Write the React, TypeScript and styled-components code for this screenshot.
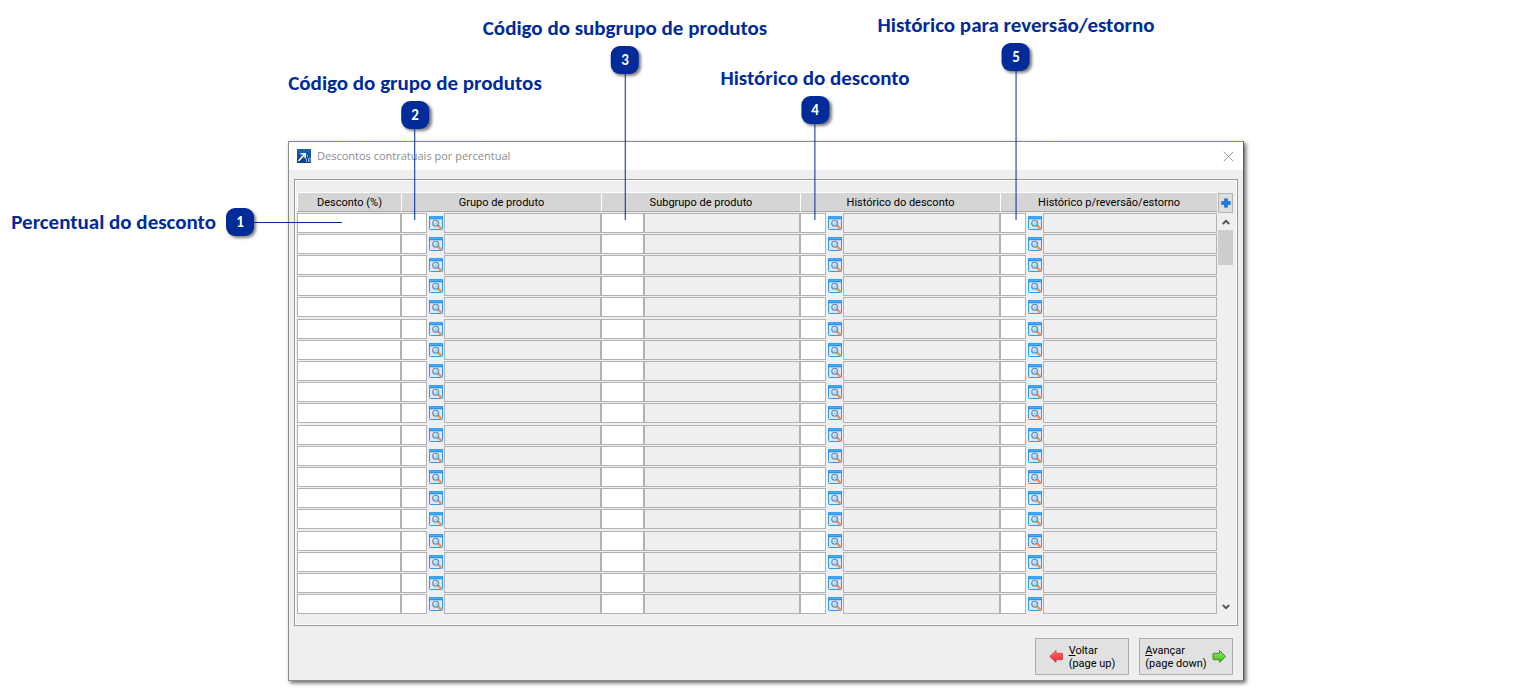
import React from "react";
import styled, { createGlobalStyle } from "styled-components";

const NAVY = "#002b98";
const UI_FONT = `Roboto, "Noto Sans", sans-serif`;
const CALLOUT_FONT = `Carlito, Lato, sans-serif`;

const GlobalStyle = createGlobalStyle`
  * { box-sizing: border-box; }
  body { margin: 0; background: #fff; }
`;

const Page = styled.main`
  padding: 141px 295px 15px 288px;
`;

const Dialog = styled.section`
  position: relative;
  min-width: 956px;
  border: 1px solid #8c8c8c;
  border-right-color: #5c5c5c;
  background: #efefef;
  box-shadow: 2px 2px 4px rgba(0, 0, 0, 0.6);
  font-family: ${UI_FONT};
  font-size: 11px;
  color: #000;
`;

const TopEdge = styled.div`
  position: absolute;
  inset: -1px 0 auto -1px;
  height: 1px;
  background: linear-gradient(
    90deg,
    #86a03c 0 56px, #8c8c8c 56px 75px, #86a03c 75px 192px,
    #8c8c8c 192px 80%, #86a03c 80% 100%
  );
`;

const TitleBar = styled.header`
  display: flex;
  align-items: center;
  gap: 6px;
  height: 28px;
  padding: 0 9px 0 8px;
  background: #fff;
`;

const Title = styled.h1`
  flex: 1;
  margin: 0;
  font-family: "Open Sans", "Noto Sans", sans-serif;
  font-size: 11px;
  font-weight: 400;
  line-height: 16px;
  color: #8c8c8c;
`;

const IconButton = styled.button`
  display: flex;
  align-items: center;
  justify-content: center;
  padding: 0;
  border: 0;
  background: none;
`;

const Panel = styled.div`
  display: flex;
  gap: 1px;
  margin: 9px 5px 0;
  padding: 12px 4px 10px 2px;
  border: 1px solid #999;
  box-shadow: inset 1px 1px #fff, inset -1px -1px #fff;
`;

const Grid = styled.table`
  flex: 1;
  width: 100%;
  height: 423px;
  table-layout: fixed;
  border-collapse: separate;
  border-spacing: 0;
`;

const HeadCell = styled.th`
  position: relative;
  height: 20px;
  padding: 2px 0 0;
  border-left: 1px solid #fff;
  border-top: 1px solid #fff;
  border-bottom: 1px solid #a8a8a8;
  background: #d5d5d5;
  font-weight: 400;
  line-height: 16px;
`;

const Cell = styled.td`
  height: 21px;
  padding: 0;
  line-height: 0;
`;

const Field = styled.input`
  display: block;
  width: 100%;
  height: 20px;
  padding: 0 3px;
  border: 1px solid #b2b2b6;
  border-radius: 0;
  background: ${(p) => (p.readOnly ? "#efefef" : "#fff")};
  font: inherit;
  outline: 0;
`;

const LookupButton = styled(IconButton)`
  width: 100%;
  height: 20px;
`;

const ScrollColumn = styled.div`
  display: flex;
  flex-direction: column;
  width: 15px;
`;

const AddButton = styled(IconButton)`
  height: 20px;
  margin-top: 1px;
  border: 1px solid #b4b4b4;
  background: #dedede;
`;

const ArrowButton = styled(IconButton)`
  height: 17px;
`;

const Track = styled.div`
  flex: 1;
`;

const Thumb = styled.div`
  height: 35px;
  background: #cdcdcd;
`;

const Footer = styled.footer`
  display: flex;
  justify-content: flex-end;
  gap: 10px;
  padding: 12px 10px 5px;
`;

const NavButton = styled.button`
  display: flex;
  align-items: center;
  justify-content: center;
  gap: 5px;
  width: 94px;
  height: 37px;
  padding: 0;
  border: 1px solid #adadad;
  background: #e1e1e1;
  color: #000;
  font: inherit;
  line-height: 13px;
  text-align: left;
  white-space: nowrap;
`;

const CalloutBox = styled.div<{ $side?: boolean; $at: number }>`
  position: absolute;
  z-index: 1;
  display: flex;
  align-items: center;
  pointer-events: none;
  ${(p) =>
    p.$side
      ? `right: calc(100% - ${p.$at}px); top: 15px;`
      : `flex-direction: column; left: ${p.$at}px; bottom: -9px; transform: translateX(-50%);`}
`;

const CalloutText = styled.span<{ $side?: boolean }>`
  margin: ${(p) => (p.$side ? "0 10px 0 0" : "0 0 6px")};
  color: ${NAVY};
  font-family: ${CALLOUT_FONT};
  font-size: 21px;
  font-weight: 700;
  line-height: 24px;
  white-space: nowrap;
`;

const Badge = styled.span`
  display: block;
  width: 28px;
  height: 28px;
  border-radius: 9px;
  background: ${NAVY};
  box-shadow: 2px 2px 3px rgba(0, 0, 0, 0.5);
  color: #fff;
  font-family: ${CALLOUT_FONT};
  font-size: 15px;
  font-weight: 700;
  line-height: 28px;
  text-align: center;
`;

const Stem = styled.span<{ $side?: boolean; $length: number }>`
  width: ${(p) => (p.$side ? p.$length : 1)}px;
  height: ${(p) => (p.$side ? 1 : p.$length)}px;
  background: ${NAVY};
`;

type CalloutProps = { n: number; text: string; at: number; length: number; side?: boolean };

const Callout = ({ n, text, at, length, side }: CalloutProps) => (
  <CalloutBox $side={side} $at={at}>
    <CalloutText $side={side}>{text}</CalloutText>
    <Badge>{n}</Badge>
    <Stem $side={side} $length={length} />
  </CalloutBox>
);

const AppIcon = () => (
  <svg width="14" height="14" viewBox="0 0 14 14" aria-hidden="true">
    <defs>
      <linearGradient id="app" x1="0" y1="0" x2="0" y2="1">
        <stop offset="0" stopColor="#1764b8" />
        <stop offset="1" stopColor="#123a80" />
      </linearGradient>
    </defs>
    <rect width="14" height="14" fill="url(#app)" />
    <path d="M1.5 12 7.5 5.5M3.5 4.8h4.7v4.4" fill="none" stroke="#fff" strokeWidth="1.6" />
    <path d="M10.5 6v2M9.5 9.5v3.5M11.5 9v4M13 8v5" stroke="#9cc0ea" strokeWidth="0.9" />
  </svg>
);

const LookupIcon = () => (
  <svg width="14" height="14" viewBox="0 0 14 14" aria-hidden="true">
    <rect x="0.5" y="0.5" width="13" height="13" rx="0.8" fill="#dfe5fa" stroke="#2b9cf5" />
    <path d="M0 0.8Q0 0 .8 0h12.4q.8 0 .8.8V3.2H0z" fill="#2196f6" />
    <path d="M1 1.2h12" stroke="#6cc2ff" strokeWidth="0.8" />
    <path d="m9 9.4 3 3.1" stroke="#ee9450" strokeWidth="2.4" strokeLinecap="round" />
    <circle cx="6.7" cy="7.2" r="3" fill="#a9def6" stroke="#7488a4" strokeWidth="1.1" />
    <path d="M5.2 7q.1-1.4 1.5-1.5" fill="none" stroke="#fff" strokeWidth="1" />
  </svg>
);

const PlusIcon = () => (
  <svg width="10" height="10" viewBox="0 0 10 10" aria-hidden="true">
    <path
      d="M3.5.8h3v2.7h2.8v3H6.5v2.8h-3V6.5H.7v-3h2.8z"
      fill="#1d7ce0"
      stroke="#1161bd"
      strokeWidth="0.6"
    />
  </svg>
);

const CloseIcon = () => (
  <svg width="11" height="11" viewBox="0 0 11 11" aria-hidden="true">
    <path d="m.7.7 9.6 9.6m0-9.6L.7 10.3" stroke="#999" fill="none" />
  </svg>
);

const Chevron = ({ down }: { down?: boolean }) => (
  <svg width="8" height="6" viewBox="0 0 8 6" aria-hidden="true">
    <path
      d={down ? "M.8 1 4 4.2 7.2 1" : "M.8 5 4 1.8 7.2 5"}
      fill="none"
      stroke="#505050"
      strokeWidth="1.8"
    />
  </svg>
);

const BackArrow = () => (
  <svg width="15" height="13" viewBox="0 0 15 13" aria-hidden="true">
    <defs>
      <linearGradient id="back" x1="0" y1="0" x2="0" y2="1">
        <stop offset="0" stopColor="#ff7777" />
        <stop offset="1" stopColor="#e3222a" />
      </linearGradient>
    </defs>
    <path
      d="M.8 6.5 7 .6v2.7h5.8q.7 0 .7.7v5q0 .7-.7.7H7v2.7z"
      fill="url(#back)"
      stroke="#d9353b"
      strokeWidth="0.8"
      strokeLinejoin="round"
    />
  </svg>
);

const ForwardArrow = () => (
  <svg width="15" height="13" viewBox="0 0 15 13" aria-hidden="true">
    <defs>
      <linearGradient id="forward" x1="0" y1="0" x2="0" y2="1">
        <stop offset="0" stopColor="#8cf05c" />
        <stop offset="1" stopColor="#42bd20" />
      </linearGradient>
    </defs>
    <path
      d="M13.6 6.5 7.6.6v2.7H1.7q-.7 0-.7.7v5q0 .7.7.7h5.9v2.7z"
      fill="url(#forward)"
      stroke="#36851f"
      strokeWidth="0.9"
      strokeLinejoin="round"
    />
  </svg>
);

type Group = { name: string; lookup: boolean; cols: number[]; callout: CalloutProps };

const groups: Group[] = [
  {
    name: "Grupo de produto",
    lookup: true,
    cols: [26, 17, 157],
    callout: { n: 2, text: "Código do grupo de produtos", at: 13, length: 91 },
  },
  {
    name: "Subgrupo de produto",
    lookup: false,
    cols: [43, 156],
    callout: { n: 3, text: "Código do subgrupo de produtos", at: 23, length: 146 },
  },
  {
    name: "Histórico do desconto",
    lookup: true,
    cols: [26, 17, 157],
    callout: { n: 4, text: "Histórico do desconto", at: 14, length: 96 },
  },
  {
    name: "Histórico p/reversão/estorno",
    lookup: true,
    cols: [26, 17, 174],
    callout: { n: 5, text: "Histórico para reversão/estorno", at: 15, length: 149 },
  },
];

const rows = Array.from({ length: 19 }, (_, i) => i + 1);

export default function App() {
  return (
    <Page>
      <GlobalStyle />
      <Dialog aria-label="Descontos contratuais por percentual">
        <TopEdge />
        <TitleBar>
          <AppIcon />
          <Title>Descontos contratuais por percentual</Title>
          <IconButton type="button" aria-label="Fechar">
            <CloseIcon />
          </IconButton>
        </TitleBar>
        <Panel>
          <Grid>
            <colgroup>
              <col style={{ width: 104 }} />
              {groups.flatMap((g) =>
                g.cols.map((width, i) => <col key={g.name + i} style={{ width }} />)
              )}
            </colgroup>
            <thead>
              <tr>
                <HeadCell scope="col">
                  Desconto (%)
                  <Callout n={1} text="Percentual do desconto" at={44} length={88} side />
                </HeadCell>
                {groups.map((g) => (
                  <HeadCell key={g.name} scope="colgroup" colSpan={g.cols.length}>
                    {g.name}
                    <Callout {...g.callout} />
                  </HeadCell>
                ))}
              </tr>
            </thead>
            <tbody>
              {rows.map((row) => (
                <tr key={row}>
                  <Cell>
                    <Field aria-label={`Desconto (%), linha ${row}`} />
                  </Cell>
                  {groups.map((g) => (
                    <React.Fragment key={g.name}>
                      <Cell>
                        <Field aria-label={`Código, ${g.name}, linha ${row}`} />
                      </Cell>
                      {g.lookup && (
                        <Cell>
                          <LookupButton type="button" aria-label={`Pesquisar ${g.name}, linha ${row}`}>
                            <LookupIcon />
                          </LookupButton>
                        </Cell>
                      )}
                      <Cell>
                        <Field readOnly aria-label={`${g.name}, linha ${row}`} />
                      </Cell>
                    </React.Fragment>
                  ))}
                </tr>
              ))}
            </tbody>
          </Grid>
          <ScrollColumn>
            <AddButton type="button" aria-label="Adicionar">
              <PlusIcon />
            </AddButton>
            <ArrowButton type="button" aria-label="Rolar para cima">
              <Chevron />
            </ArrowButton>
            <Track>
              <Thumb />
            </Track>
            <ArrowButton type="button" aria-label="Rolar para baixo">
              <Chevron down />
            </ArrowButton>
          </ScrollColumn>
        </Panel>
        <Footer>
          <NavButton type="button">
            <BackArrow />
            <span>
              <u>V</u>oltar
              <br />
              (page up)
            </span>
          </NavButton>
          <NavButton type="button">
            <span>
              <u>A</u>vançar
              <br />
              (page down)
            </span>
            <ForwardArrow />
          </NavButton>
        </Footer>
      </Dialog>
    </Page>
  );
}
